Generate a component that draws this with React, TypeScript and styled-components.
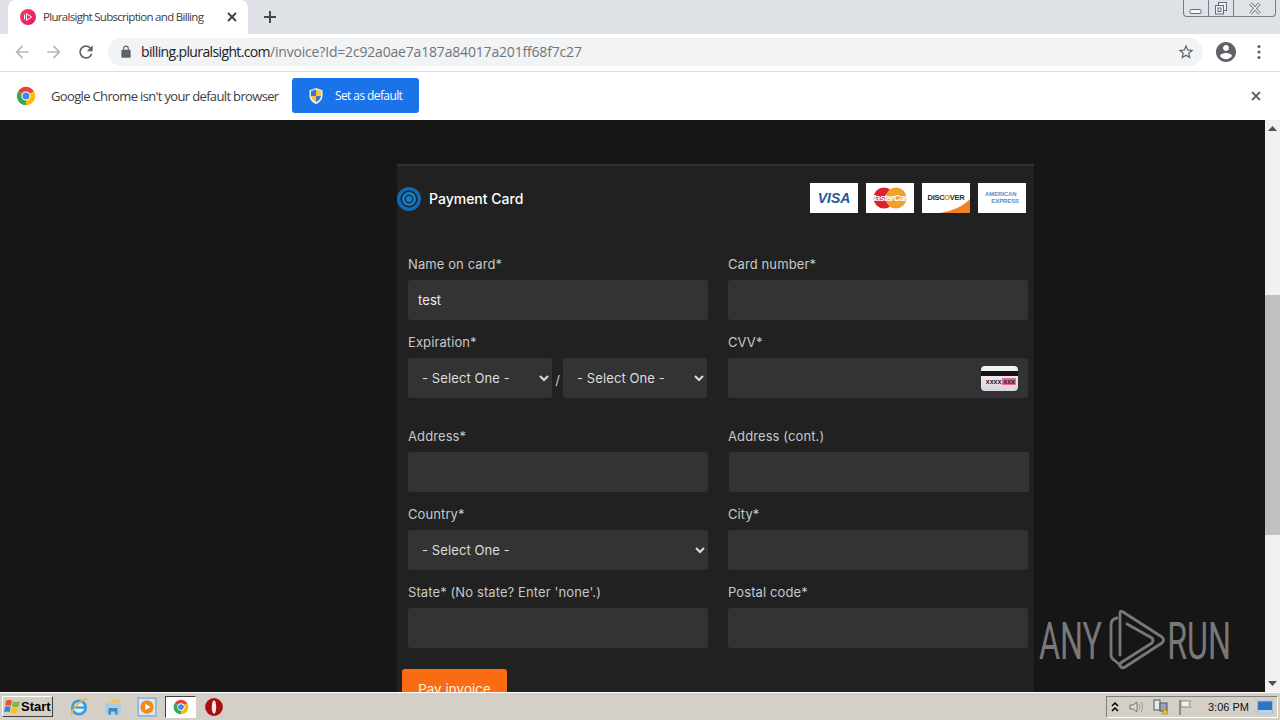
import React from "react";
import styled, { createGlobalStyle } from "styled-components";

const Global = createGlobalStyle`
  html, body { margin: 0; padding: 0; background: #161616; overflow: hidden; }
  * { box-sizing: border-box; }
`;

const Screen = styled.div`
  width: 1280px; height: 720px; display: flex; flex-direction: column; overflow: hidden; position: relative;
  font-family: "Open Sans", "Liberation Sans", sans-serif;
`;
const TabStrip = styled.div`
  height: 34px; background: #dee1e6; display: flex; align-items: flex-end; padding-left: 8px; flex: none;
`;
const Tab = styled.div`
  width: 240px; height: 34px; background: #fff; border-radius: 8px 8px 0 0; display: flex; align-items: center; padding-left: 12px;
`;
const Favicon = styled.svg`width: 16px; height: 16px; flex: none;`;
const TabTitle = styled.span`
  margin-left: 7px; margin-top: -1px; width: 170px; font-size: 11.5px; color: #3c4043; white-space: nowrap; letter-spacing: -0.7px;
`;
const TabClose = styled.svg`width: 12px; height: 12px; margin-left: 13px; flex: none;`;
const NewTab = styled.svg`width: 14px; height: 14px; margin: 0 0 10px 15px; flex: none;`;
const WindowControls = styled.div`
  margin-left: auto; margin-right: 4px; align-self: flex-start; width: 93px; height: 17px; display: flex;
  border: 1px solid #767c88; border-top: 0; border-radius: 0 0 4px 4px; background: #dfe2e7;
`;
const WinButton = styled.div<{ $w: number; $line?: boolean }>`
  width: ${(p) => p.$w}px; display: flex; align-items: center; justify-content: center;
  border-right: ${(p) => (p.$line ? "1px solid #767c88" : "0")};
`;
const WinIcon = styled.svg`width: 14px; height: 13px;`;

const Toolbar = styled.div`
  height: 38px; background: #fff; border-bottom: 1px solid #dadce0; display: flex; align-items: center; flex: none; padding-bottom: 1px;
`;
const NavIcon = styled.svg<{ $off?: boolean; $ml: number }>`
  width: 20px; height: 20px; flex: none; margin-left: ${(p) => p.$ml}px; fill: ${(p) => (p.$off ? "#b4b7bb" : "#5f6368")};
`;
const Omnibox = styled.div`
  width: 1095px; height: 28px; margin-left: 12px; border-radius: 14px; background: #f1f3f4; display: flex; align-items: center; padding-left: 11px; flex: none;
`;
const LockIcon = styled.svg`width: 14px; height: 14px; fill: #5f6368; flex: none;`;
const Url = styled.div`
  margin-left: 8px; margin-top: -1px; font-size: 14px; color: #70757a; white-space: nowrap; letter-spacing: -0.18px;
`;
const UrlHost = styled.span`color: #202124; letter-spacing: -0.63px;`;
const StarIcon = styled.svg`width: 18px; height: 18px; fill: #5f6368; margin-left: auto; margin-right: 8px; flex: none;`;
const AccountIcon = styled.svg`width: 24px; height: 24px; fill: #5f6368; margin-left: 11px; flex: none;`;
const MenuIcon = styled.svg`width: 16px; height: 16px; fill: #5f6368; margin-left: 13px; flex: none;`;

const Infobar = styled.div`
  height: 48px; background: #fff; display: flex; align-items: center; padding-left: 16px; flex: none;
`;
const InfoLogo = styled.svg`width: 20px; height: 20px; flex: none;`;
const InfoText = styled.span`
  margin-left: 15px; margin-top: -1px; font-size: 13px; color: #3c4043; white-space: nowrap; width: 241px; letter-spacing: -0.65px;
`;
const DefaultButton = styled.div`
  width: 127px; height: 35px; background: #1a73e8; border-radius: 3px; color: #fff; display: flex; align-items: center;
  padding-left: 16px; font-size: 12px; margin-top: -1px; letter-spacing: -0.6px; flex: none;
`;
const Shield = styled.svg`width: 16px; height: 18px; margin-right: 11px; flex: none;`;
const InfoClose = styled.svg`width: 12px; height: 12px; margin-left: auto; margin-right: 18px; flex: none;`;

const Main = styled.div`
  flex: 1; display: flex; min-height: 0; background: #161616;
`;
const Page = styled.div`
  flex: 1; overflow: hidden; padding: 44px 0 0 397px;
  font-family: Inter, "Liberation Sans", sans-serif;
`;
const Panel = styled.div`
  width: 637px; background: #212121; border-top: 2px solid #333; padding-top: 17px; height: 600px;
`;
const PanelHead = styled.div`
  display: flex; align-items: center; height: 30px; padding-right: 8px;
`;
const Radio = styled.svg`width: 24px; height: 24px; flex: none; margin-top: 2px;`;
const PanelTitle = styled.span`
  margin-left: 8px; font-size: 14px; font-weight: 500; color: #fff; margin-top: 1px;
`;
const Cards = styled.div`margin-left: auto; display: flex; gap: 8px;`;
const Card = styled.div`
  width: 48px; height: 30px; background: #fff; position: relative; overflow: hidden; display: flex; align-items: center; justify-content: center;
`;
const VisaMark = styled.span`
  font: italic 700 14px "Liberation Sans", sans-serif; color: #1a5a9c;
`;
const McCircles = styled.svg`width: 36px; height: 24px; position: absolute;`;
const McText = styled.span`
  position: relative; font: italic 700 9px "Liberation Sans", sans-serif; color: #fff; letter-spacing: -0.65px;
`;
const DiscoverText = styled.span`
  position: relative; font: 700 7.5px "Liberation Sans", sans-serif; color: #2a2a2a; letter-spacing: -0.3px; margin-top: -2px;
`;
const DiscoverO = styled.span`color: #f48120;`;
const DiscoverSwoosh = styled.svg`position: absolute; right: 0; bottom: 0; width: 30px; height: 14px;`;
const AmexText = styled.div`
  font: 700 6px/7px "Liberation Sans", sans-serif; color: #5a8cc8; width: 34px; letter-spacing: -0.1px;
`;
const AmexLine = styled.div<{ $right?: boolean }>`
  text-align: ${(p) => (p.$right ? "right" : "left")};
`;

const FormGrid = styled.div`
  display: grid; grid-template-columns: 300px 300px; column-gap: 20px; padding-left: 11px; margin-top: 41px;
`;
const Field = styled.div<{ $gap: number }>`
  margin-bottom: ${(p) => p.$gap}px; position: relative;
`;
const Label = styled.div`
  height: 20px; line-height: 20px; margin-bottom: 6px; font-size: 13px; color: #c8c8c8; letter-spacing: 0.1px; white-space: nowrap;
`;
const TextInput = styled.input<{ $nudge?: boolean }>`
  display: block; width: 100%; height: 40px; background: #333; border: 0; border-radius: 3px; padding: 0 10px; outline: 0;
  margin-left: ${(p) => (p.$nudge ? "1px" : "0")};
  color: #eee; font: 13px Inter, "Liberation Sans", sans-serif; letter-spacing: 0.1px;
`;
const SelectBox = styled.select<{ $w: string }>`
  display: block; width: ${(p) => p.$w}; height: 40px; background: #333; border: 0; border-radius: 3px; padding: 0 10px; outline: 0;
  color: #ddd; font: 13px Inter, "Liberation Sans", sans-serif; letter-spacing: 0.1px; color-scheme: dark; flex: none;
`;
const ExpiryRow = styled.div`display: flex; align-items: center;`;
const Slash = styled.span`
  width: 11px; text-align: center; color: #ccc; font-size: 13px; margin-top: 4px; flex: none;
`;
const CvvCard = styled.div`
  position: absolute; right: 10px; bottom: 7px; width: 37px; height: 25px; border-radius: 4px; background: linear-gradient(#f7f7f7, #d9d5e0);
  padding-top: 5px; display: flex; flex-direction: column; align-items: stretch;
`;
const CvvStrip = styled.div`height: 5px; background: #1a1216;`;
const CvvDigits = styled.div`
  display: flex; justify-content: flex-end; margin-top: 2px; font: 700 7px/7px "Liberation Sans", sans-serif; color: #222;
`;
const CvvPlain = styled.span`padding: 0 1px;`;
const CvvHot = styled.span`background: #f2678a; padding: 0 1px; margin-right: 2px;`;

const PayButton = styled.div`
  width: 105px; height: 40px; margin-left: 5px; margin-top: -7px; background: #f96c14; border-radius: 3px;
  color: #fff2e0; font-size: 13.3px; letter-spacing: 0.1px; display: flex; align-items: center; justify-content: center;
`;

const Scrollbar = styled.div`
  width: 15px; background: #f1f1f1; display: flex; flex-direction: column; align-items: center; flex: none;
`;
const ScrollArrow = styled.svg<{ $bottom?: boolean }>`
  width: 9px; height: 5px; fill: #505050; flex: none; margin-top: ${(p) => (p.$bottom ? "auto" : "6px")}; margin-bottom: ${(p) => (p.$bottom ? "6px" : "0")};
`;
const ScrollThumb = styled.div`
  width: 15px; height: 240px; background: #c1c1c1; margin-top: 164px; flex: none;
`;

const Watermark = styled.div`
  position: absolute; left: 1039px; top: 610px; width: 192px; height: 62px; display: flex; align-items: center; justify-content: space-between;
`;
const WmWord = styled.span`
  font: 400 52px/62px Roboto, "Liberation Sans", sans-serif; color: #787878; display: block; white-space: nowrap; transform: scaleX(.62); margin-top: 2px;
`;
const WmWordLeft = styled(WmWord)`transform-origin: left center; width: 62px;`;
const WmWordRight = styled(WmWord)`transform-origin: right center; text-align: right; direction: rtl; width: 58px;`;
const WmLogo = styled.svg`width: 72px; height: 70px; flex: none;`;

const Taskbar = styled.div`
  height: 28px; background: #d4d0c8; border-top: 1px solid #fff; display: flex; align-items: center; flex: none; padding: 0 2px;
`;
const StartButton = styled.div`
  width: 51px; height: 21px; display: flex; align-items: center; padding-left: 1px; background: #d4d0c8; flex: none;
  border: 1px solid; border-color: #fff #404040 #404040 #fff; font: 700 13px "Liberation Sans", sans-serif; color: #000;
`;
const StartFlag = styled.svg`width: 17px; height: 17px; flex: none;`;
const TaskIcon = styled.svg<{ $ml: number }>`width: 20px; height: 20px; margin-left: ${(p) => p.$ml}px; flex: none;`;
const ActiveTask = styled.div`
  width: 31px; height: 22px; margin-left: 8px; flex: none; display: flex; align-items: center; justify-content: center; background: #fff;
  border: 1px solid; border-color: #404040 #fff #fff #404040;
`;
const TaskLogo = styled.svg`width: 16px; height: 16px;`;
const Tray = styled.div`
  margin-left: auto; width: 172px; height: 22px; display: flex; align-items: center; border: 1px solid; border-color: #808080 #fff #fff #808080; flex: none;
`;
const TrayIcon = styled.svg<{ $ml: number }>`
  width: 16px; height: 16px; margin-left: ${(p) => p.$ml}px; flex: none;
`;
const Clock = styled.span`
  margin-left: 15px; font: 11px "Liberation Sans", Tahoma, sans-serif; color: #111; white-space: nowrap; width: 44px; flex: none;
`;

const ChromeMark = () => (
  <>
    <path d="M24 24L4.95 13A22 22 0 0 1 43.05 13Z" fill="#ea4335" />
    <path d="M24 24L43.05 13A22 22 0 0 1 24 46Z" fill="#fbbc05" />
    <path d="M24 24L24 46A22 22 0 0 1 4.95 13Z" fill="#34a853" />
    <circle cx="24" cy="24" r="11" fill="#fff" />
    <circle cx="24" cy="24" r="8.5" fill="#4285f4" />
  </>
);

const Cross = ({ color = "#5f6368" }: { color?: string }) => (
  <path d="M2 2L10 10M10 2L2 10" stroke={color} strokeWidth="1.8" fill="none" />
);

export default function App() {
  return (
    <Screen>
      <Global />
      <TabStrip>
        <Tab>
          <Favicon viewBox="0 0 16 16">
            <defs>
              <linearGradient id="ps" x1="0" y1="0" x2="1" y2="1">
                <stop offset="0" stopColor="#f0454b" />
                <stop offset="1" stopColor="#e0127e" />
              </linearGradient>
            </defs>
            <circle cx="8" cy="8" r="8" fill="url(#ps)" />
            <path d="M6.5 4.5v7l5-3.5z" fill="none" stroke="#fff" strokeWidth="1" />
            <path d="M4.5 5.5v5" stroke="#fff" strokeWidth="1" />
          </Favicon>
          <TabTitle>Pluralsight Subscription and Billing</TabTitle>
          <TabClose viewBox="0 0 12 12"><Cross color="#3c4043" /></TabClose>
        </Tab>
        <NewTab viewBox="0 0 14 14">
          <path d="M7 1v12M1 7h12" stroke="#45494e" strokeWidth="2" />
        </NewTab>
        <WindowControls>
          <WinButton $w={25} $line>
            <WinIcon viewBox="0 0 14 13"><rect x="1" y="7.5" width="11" height="4" rx="1" fill="#f4f5f7" stroke="#666c78" /></WinIcon>
          </WinButton>
          <WinButton $w={25} $line>
            <WinIcon viewBox="0 0 14 13">
              <rect x="4.5" y="0.5" width="8" height="8" fill="#eef0f3" stroke="#666c78" />
              <rect x="1.5" y="3.5" width="8" height="8.5" fill="#eef0f3" stroke="#666c78" />
              <rect x="4" y="6" width="3" height="3.5" fill="none" stroke="#666c78" />
            </WinIcon>
          </WinButton>
          <WinButton $w={41}>
            <WinIcon viewBox="0 0 14 13">
              <path d="M2.5 1.5L11.5 11.5M11.5 1.5L2.5 11.5" stroke="#666c78" strokeWidth="3.2" />
              <path d="M2.5 1.5L11.5 11.5M11.5 1.5L2.5 11.5" stroke="#f4f5f7" strokeWidth="1.4" />
            </WinIcon>
          </WinButton>
        </WindowControls>
      </TabStrip>

      <Toolbar>
        <NavIcon $off $ml={12} viewBox="0 0 24 24">
          <path d="M20 11H7.83l5.59-5.59L12 4l-8 8 8 8 1.41-1.41L7.83 13H20v-2z" />
        </NavIcon>
        <NavIcon $off $ml={12} viewBox="0 0 24 24">
          <path d="M12 4l-1.41 1.41L16.17 11H4v2h12.17l-5.58 5.59L12 20l8-8z" />
        </NavIcon>
        <NavIcon $ml={12} viewBox="0 0 24 24">
          <path d="M17.65 6.35A7.958 7.958 0 0012 4c-4.42 0-7.99 3.58-7.99 8s3.57 8 7.99 8c3.73 0 6.84-2.55 7.73-6h-2.08A5.99 5.99 0 0112 18c-3.31 0-6-2.69-6-6s2.69-6 6-6c1.66 0 3.14.69 4.22 1.78L13 11h7V4l-2.35 2.35z" />
        </NavIcon>
        <Omnibox>
          <LockIcon viewBox="0 0 24 24">
            <path d="M18 8h-1V6c0-2.76-2.24-5-5-5S7 3.24 7 6v2H6c-1.1 0-2 .9-2 2v10c0 1.1.9 2 2 2h12c1.1 0 2-.9 2-2V10c0-1.1-.9-2-2-2zM9 6c0-1.66 1.34-3 3-3s3 1.34 3 3v2H9V6z" />
          </LockIcon>
          <Url><UrlHost>billing.pluralsight.com</UrlHost>/invoice?Id=2c92a0ae7a187a84017a201ff68f7c27</Url>
          <StarIcon viewBox="0 0 24 24">
            <path d="M22 9.24l-7.19-.62L12 2 9.19 8.63 2 9.24l5.46 4.73L5.82 21 12 17.27 18.18 21l-1.63-7.03L22 9.24zM12 15.4l-3.76 2.27 1-4.28-3.32-2.88 4.38-.38L12 6.1l1.71 4.04 4.38.38-3.32 2.88 1 4.28L12 15.4z" />
          </StarIcon>
        </Omnibox>
        <AccountIcon viewBox="0 0 24 24">
          <path d="M12 2C6.48 2 2 6.48 2 12s4.48 10 10 10 10-4.48 10-10S17.52 2 12 2zm0 3c1.66 0 3 1.34 3 3s-1.34 3-3 3-3-1.34-3-3 1.34-3 3-3zm0 14.2c-2.5 0-4.71-1.28-6-3.22.03-1.99 4-3.08 6-3.08 1.99 0 5.97 1.09 6 3.08-1.29 1.94-3.5 3.22-6 3.22z" />
        </AccountIcon>
        <MenuIcon viewBox="0 0 16 16">
          <circle cx="8" cy="2.5" r="1.6" /><circle cx="8" cy="8" r="1.6" /><circle cx="8" cy="13.5" r="1.6" />
        </MenuIcon>
      </Toolbar>

      <Infobar>
        <InfoLogo viewBox="0 0 48 48"><ChromeMark /></InfoLogo>
        <InfoText>Google Chrome isn't your default browser</InfoText>
        <DefaultButton>
          <Shield viewBox="0 0 16 18">
            <path d="M8 1l6.5 2.2v5.5c0 4-2.8 6.8-6.5 8.3C4.3 15.5 1.5 12.7 1.5 8.7V3.2z" fill="#e8eef6" />
            <path d="M8 2.5v6.5H3V4z" fill="#3f74c9" />
            <path d="M8 2.5L13 4v5H8z" fill="#f5c92b" />
            <path d="M3 9h5v6C5.5 13.8 3.5 12 3 9z" fill="#f5c92b" />
            <path d="M8 9h5c-.5 3-2.5 4.8-5 6z" fill="#3f74c9" />
          </Shield>
          Set as default
        </DefaultButton>
        <InfoClose viewBox="0 0 12 12"><Cross color="#5f6368" /></InfoClose>
      </Infobar>

      <Main>
        <Page>
          <Panel>
            <PanelHead>
              <Radio viewBox="0 0 24 24">
                <circle cx="12" cy="12" r="12" fill="#0f6cb0" />
                <circle cx="12" cy="12" r="8.5" fill="#15232e" />
                <circle cx="12" cy="12" r="7" fill="#1680c9" />
                <circle cx="12" cy="12" r="4.5" fill="#15344c" />
                <circle cx="12" cy="12" r="3" fill="#1a7dc2" />
              </Radio>
              <PanelTitle>Payment Card</PanelTitle>
              <Cards>
                <Card><VisaMark>VISA</VisaMark></Card>
                <Card>
                  <McCircles viewBox="0 0 36 24">
                    <circle cx="12" cy="12" r="10.5" fill="#d8232f" />
                    <circle cx="24" cy="12" r="10.5" fill="#f0a12b" />
                  </McCircles>
                  <McText>MasterCard</McText>
                </Card>
                <Card>
                  <DiscoverSwoosh viewBox="0 0 30 14"><path d="M0 14C12 12 24 7 30 0v14z" fill="#f48120" /></DiscoverSwoosh>
                  <DiscoverText>DISC<DiscoverO>O</DiscoverO>VER</DiscoverText>
                </Card>
                <Card>
                  <AmexText>
                    <AmexLine>AMERICAN</AmexLine>
                    <AmexLine $right>EXPRESS</AmexLine>
                  </AmexText>
                </Card>
              </Cards>
            </PanelHead>

            <FormGrid>
              <Field $gap={12}>
                <Label>Name on card*</Label>
                <TextInput readOnly value="test" />
              </Field>
              <Field $gap={12}>
                <Label>Card number*</Label>
                <TextInput readOnly />
              </Field>
              <Field $gap={28}>
                <Label>Expiration*</Label>
                <ExpiryRow>
                  <SelectBox $w="144px"><option>- Select One -</option></SelectBox>
                  <Slash>/</Slash>
                  <SelectBox $w="144px"><option>- Select One -</option></SelectBox>
                </ExpiryRow>
              </Field>
              <Field $gap={28}>
                <Label>CVV*</Label>
                <TextInput readOnly />
                <CvvCard>
                  <CvvStrip />
                  <CvvDigits><CvvPlain>xxxx</CvvPlain><CvvHot>xxx</CvvHot></CvvDigits>
                </CvvCard>
              </Field>
              <Field $gap={12}>
                <Label>Address*</Label>
                <TextInput readOnly />
              </Field>
              <Field $gap={12}>
                <Label>Address (cont.)</Label>
                <TextInput readOnly $nudge />
              </Field>
              <Field $gap={12}>
                <Label>Country*</Label>
                <SelectBox $w="100%"><option>- Select One -</option></SelectBox>
              </Field>
              <Field $gap={12}>
                <Label>City*</Label>
                <TextInput readOnly />
              </Field>
              <Field $gap={28}>
                <Label>State* (No state? Enter 'none'.)</Label>
                <TextInput readOnly />
              </Field>
              <Field $gap={28}>
                <Label>Postal code*</Label>
                <TextInput readOnly />
              </Field>
            </FormGrid>
            <PayButton>Pay invoice</PayButton>
          </Panel>
        </Page>
        <Scrollbar>
          <ScrollArrow viewBox="0 0 9 5"><path d="M4.5 0L9 5H0z" /></ScrollArrow>
          <ScrollThumb />
          <ScrollArrow $bottom viewBox="0 0 9 5"><path d="M0 0h9L4.5 5z" /></ScrollArrow>
        </Scrollbar>
      </Main>

      <Watermark>
        <WmWordLeft>ANY</WmWordLeft>
        <WmLogo viewBox="1 1 72 70">
          <path
            d="M17 13Q11 14 11 20V50Q11 53 14 55L20 60M20 50V8Q20 5 23 7L62 32Q65 35 62 38L25 62Q22 64 20 61Q19 59 22 57L52 38Q54 35 52 33L27 19"
            fill="none"
            stroke="#787878"
            strokeWidth="2.8"
            strokeLinecap="round"
            strokeLinejoin="round"
          />
        </WmLogo>
        <WmWordRight>RUN</WmWordRight>
      </Watermark>

      <Taskbar>
        <StartButton>
          <StartFlag viewBox="0 0 16 16">
            <path d="M2 2.5c2-1 4-1 5.5 0L6.5 7.5C5 6.5 3 6.5 1 7.5z" fill="#e8562a" />
            <path d="M8.5 3c2 1 4 1 6.5 0l-1 5c-2.5 1-5 1-6.5 0z" fill="#7cb84a" />
            <path d="M1 8.5c2-1 3.5-1 5.2 0l-1 5c-1.7-1-3.7-1-5.2 0z" fill="#3a80d2" />
            <path d="M7 9c2 1 4 1 6.5 0l-1 5c-2.5 1-4.5 1-6.5 0z" fill="#f4c221" />
          </StartFlag>
          Start
        </StartButton>
        <TaskIcon $ml={16} viewBox="0 0 18 18">
          <circle cx="9" cy="9.5" r="6" fill="#dceef9" stroke="#3b9bdc" strokeWidth="2.5" />
          <path d="M3.5 9.5h11" stroke="#3b9bdc" strokeWidth="2" />
          <path d="M2 16C3 10 10 3 16.5 1.5" fill="none" stroke="#e8b93c" strokeWidth="1.5" />
        </TaskIcon>
        <TaskIcon $ml={14} viewBox="0 0 18 18">
          <path d="M2 5h5l1-3h7v4H2z" fill="#e6c86a" />
          <path d="M2 6h14v10H2z" fill="#a9cde6" />
          <path d="M5 10h8v6h-2v-3H7v3H5z" fill="#3e87c0" />
        </TaskIcon>
        <TaskIcon $ml={14} viewBox="0 0 18 18">
          <rect x="1" y="1" width="16" height="16" fill="#dbe8f6" stroke="#6d9fd6" />
          <circle cx="9" cy="9" r="6" fill="#ee8b1d" />
          <path d="M7.5 6v6L12 9z" fill="#fff" />
        </TaskIcon>
        <ActiveTask>
          <TaskLogo viewBox="0 0 48 48"><ChromeMark /></TaskLogo>
        </ActiveTask>
        <TaskIcon $ml={8} viewBox="0 0 18 18">
          <circle cx="9" cy="9" r="8" fill="#a80f0e" />
          <ellipse cx="9" cy="9" rx="2" ry="6" fill="#f6e6e6" />
        </TaskIcon>
        <Tray>
          <TrayIcon $ml={0} viewBox="0 0 16 16">
            <path d="M5 7l3-3 3 3M5 12l3-3 3 3" fill="none" stroke="#000" strokeWidth="1.5" />
          </TrayIcon>
          <TrayIcon $ml={5} viewBox="0 0 16 16">
            <path d="M2 6h3l4-3v10l-4-3H2z" fill="#d8d8d8" stroke="#777" />
            <path d="M11 5c1 2 1 4 0 6M13 3c2 3 2 7 0 10" fill="none" stroke="#999" />
          </TrayIcon>
          <TrayIcon $ml={8} viewBox="0 0 16 16">
            <rect x="2" y="1" width="6" height="10" fill="#e8e8e8" stroke="#555" />
            <rect x="8" y="4" width="7" height="8" fill="#9aa7b8" stroke="#555" />
            <path d="M10 15l3-6 3 6z" fill="#f6c915" stroke="#8a7000" strokeWidth=".5" />
          </TrayIcon>
          <TrayIcon $ml={9} viewBox="0 0 16 16">
            <path d="M3 1v15" stroke="#777" strokeWidth="1.5" />
            <path d="M4 2h10l-2 3 2 3H4z" fill="#f2f2f2" stroke="#888" />
          </TrayIcon>
          <Clock>3:06 PM</Clock>
          <TrayIcon $ml={5} viewBox="0 0 16 16">
            <rect x="0.5" y="2" width="15" height="12" fill="#2f75c6" stroke="#9cb9d9" />
            <rect x="1" y="11" width="14" height="3" fill="#bcd3ea" />
          </TrayIcon>
        </Tray>
      </Taskbar>
    </Screen>
  );
}
